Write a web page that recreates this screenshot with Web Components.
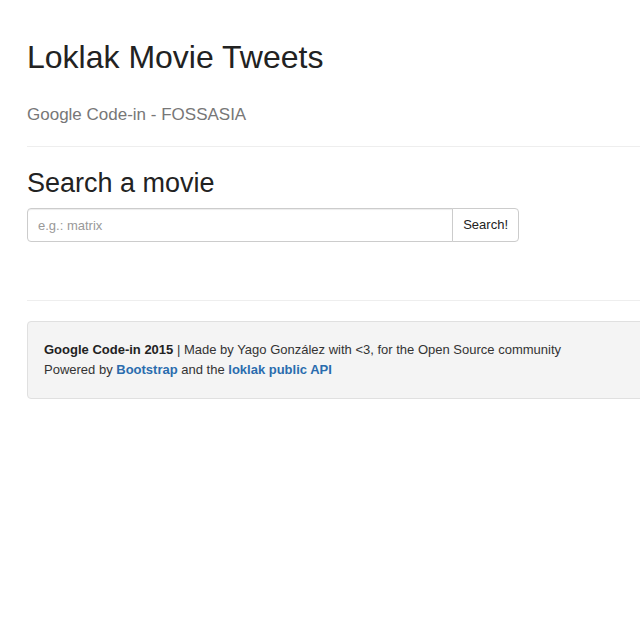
<!DOCTYPE html>
<html lang="en">
<head>
<meta charset="utf-8">
<title>Loklak Movie Tweets</title>
<style>
html { overflow-x: hidden; }
body { margin: 0; background: #fff; color: #222; font: 13px/20px "Liberation Sans", Arial, sans-serif; }
</style>
</head>
<body>
<movie-app></movie-app>
<script>
class PageTitle extends HTMLElement {
  constructor() {
    super();
    this.attachShadow({ mode: "open" }).innerHTML = `
      <style>
        :host { display: block; padding-bottom: 20px; border-bottom: 1px solid #eee; }
        h1 { margin: 0; font-size: 32px; font-weight: 400; line-height: 40px; }
        p { margin: 27px 0 0; font-size: 17px; line-height: 22px; color: #777; }
      </style>
      <h1><slot></slot></h1>
      <p><slot name="subtitle"></slot></p>`;
  }
}
class MovieSearch extends HTMLElement {
  constructor() {
    super();
    this.attachShadow({ mode: "open" }).innerHTML = `
      <style>
        :host { display: block; }
        label { display: block; }
        h2 { margin: 0 0 9px; font-size: 27px; font-weight: 400; line-height: 32px; }
        form { display: flex; width: 80%; max-width: 492px; }
        input, button { box-sizing: border-box; height: 34px; margin: 0; border: 1px solid #ccc; font: inherit; background: #fff; }
        input { flex: 1; min-width: 0; padding: 6px 10px; border-radius: 4px 0 0 4px; color: #555; box-shadow: inset 0 1px 1px rgba(0,0,0,.075); }
        input::placeholder { color: #999; opacity: 1; }
        button { margin-left: -1px; padding: 6px 10px; border-radius: 0 4px 4px 0; color: #222; }
      </style>
      <h2><label for="q">Search a movie</label></h2>
      <form onsubmit="return false"><input id="q" type="text" placeholder="e.g.: matrix"><button type="submit">Search!</button></form>`;
  }
}
class PageFooter extends HTMLElement {
  constructor() {
    super();
    this.attachShadow({ mode: "open" }).innerHTML = `
      <style>
        :host { display: block; padding: 18px 16px; border: 1px solid #e0e0e0; border-radius: 4px; background: #f4f4f4; }
        p { margin: 0; color: #333; }
        b { color: #222; }
        a { color: #2a6cae; font-weight: 700; text-decoration: none; }
      </style>
      <p><b>Google Code-in 2015</b> | Made by Yago González with &lt;3, for the Open Source community</p>
      <p>Powered by <a href="#bootstrap">Bootstrap</a> and the <a href="#api">loklak public API</a></p>`;
  }
}
class MovieApp extends HTMLElement {
  constructor() {
    super();
    this.attachShadow({ mode: "open" }).innerHTML = `
      <style>
        :host { display: block; padding: 37px 0 0 27px; }
        main { margin-right: -16px; }
        movie-search { margin-top: 20px; padding-bottom: 58px; border-bottom: 1px solid #eee; }
        page-footer { margin-top: 20px; }
      </style>
      <main>
        <page-title>Loklak Movie Tweets<span slot="subtitle">Google Code-in - FOSSASIA</span></page-title>
        <movie-search></movie-search>
        <page-footer></page-footer>
      </main>`;
  }
}
customElements.define("page-title", PageTitle);
customElements.define("movie-search", MovieSearch);
customElements.define("page-footer", PageFooter);
customElements.define("movie-app", MovieApp);
</script>
</body>
</html>
